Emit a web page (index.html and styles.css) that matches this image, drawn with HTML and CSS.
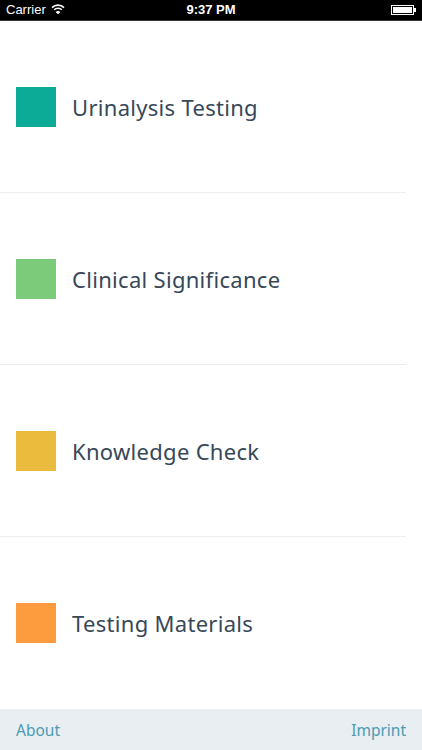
FILE: index.html
```html
<!DOCTYPE html>
<html>
<head>
<meta charset="utf-8">
<link rel="stylesheet" href="styles.css">
</head>
<body>
<div class="screen">
  <div class="statusbar">
    <div class="sb-left">Carrier
      <svg class="wifi" width="14" height="10" viewBox="0 0 14 10">
        <path d="M1 3.6 A8.5 8.5 0 0 1 13 3.6" fill="none" stroke="#fff" stroke-width="1.6"/>
        <path d="M3.2 5.8 A5.4 5.4 0 0 1 10.8 5.8" fill="none" stroke="#fff" stroke-width="1.6"/>
        <path d="M5.3 8 A2.4 2.4 0 0 1 8.7 8 L7 9.8 Z" fill="#fff" stroke="#fff" stroke-width="1"/>
      </svg>
    </div>
    <div class="sb-time">9:37 PM</div>
    <div class="sb-right">
      <div class="battery"><div class="battery-fill"></div></div>
      <div class="battery-nub"></div>
    </div>
  </div>
  <ul class="menu">
    <li class="item"><span class="swatch teal"></span><span class="label">Urinalysis Testing</span></li>
    <li class="item"><span class="swatch green"></span><span class="label">Clinical Significance</span></li>
    <li class="item"><span class="swatch yellow"></span><span class="label">Knowledge Check</span></li>
    <li class="item last"><span class="swatch orange"></span><span class="label">Testing Materials</span></li>
  </ul>
  <div class="footer">
    <span class="link">About</span>
    <span class="link">Imprint</span>
  </div>
</div>
</body>
</html>
```
FILE: styles.css
```css
* { box-sizing: border-box; }
html, body { margin: 0; padding: 0; background: #fff; }
.screen {
  width: 422px;
  height: 750px;
  display: flex;
  flex-direction: column;
  font-family: "Noto Sans", "Open Sans", sans-serif;
}
.statusbar {
  height: 21px;
  flex: none;
  background: #000;
  color: #fff;
  font-family: "Liberation Sans", Arial, sans-serif;
  font-size: 13px;
  display: flex;
  align-items: center;
  justify-content: space-between;
  padding: 0 6px 1px 6px;
  border-bottom: 1px solid #3a3a3a;
  position: relative;
}
.sb-left { display: flex; align-items: center; gap: 5px; }
.wifi { margin-top: -1px; }
.sb-time {
  position: absolute;
  left: 0; right: 0;
  text-align: center;
  font-weight: bold;
  font-size: 13px;
}
.sb-right { display: flex; align-items: center; }
.battery {
  width: 23px;
  height: 10px;
  border: 1px solid #fff;
  padding: 1px;
}
.battery-fill { width: 100%; height: 100%; background: #fff; }
.battery-nub { width: 2px; height: 4px; background: #fff; }
.menu {
  list-style: none;
  margin: 0;
  padding: 0;
  flex: 1;
  display: flex;
  flex-direction: column;
}
.item {
  height: 172px;
  flex: none;
  display: flex;
  align-items: center;
  padding-left: 16px;
  border-bottom: 1px solid #ececec;
  margin-right: 16px;
}
.item.last { border-bottom: none; }
.swatch {
  width: 40px;
  height: 40px;
  flex: none;
}
.teal { background: #0bab98; }
.green { background: #7ccb7b; }
.yellow { background: #ebbb3e; }
.orange { background: #fd9b3f; }
.label {
  margin-left: 16px;
  font-size: 22px;
  color: #374859;
  letter-spacing: 0.3px;
}
.footer {
  height: 41px;
  flex: none;
  background: #e8eef2;
  display: flex;
  align-items: center;
  justify-content: space-between;
  padding: 0 16px;
}
.link {
  color: #4b9bb4;
  font-size: 15.5px;
}
```
